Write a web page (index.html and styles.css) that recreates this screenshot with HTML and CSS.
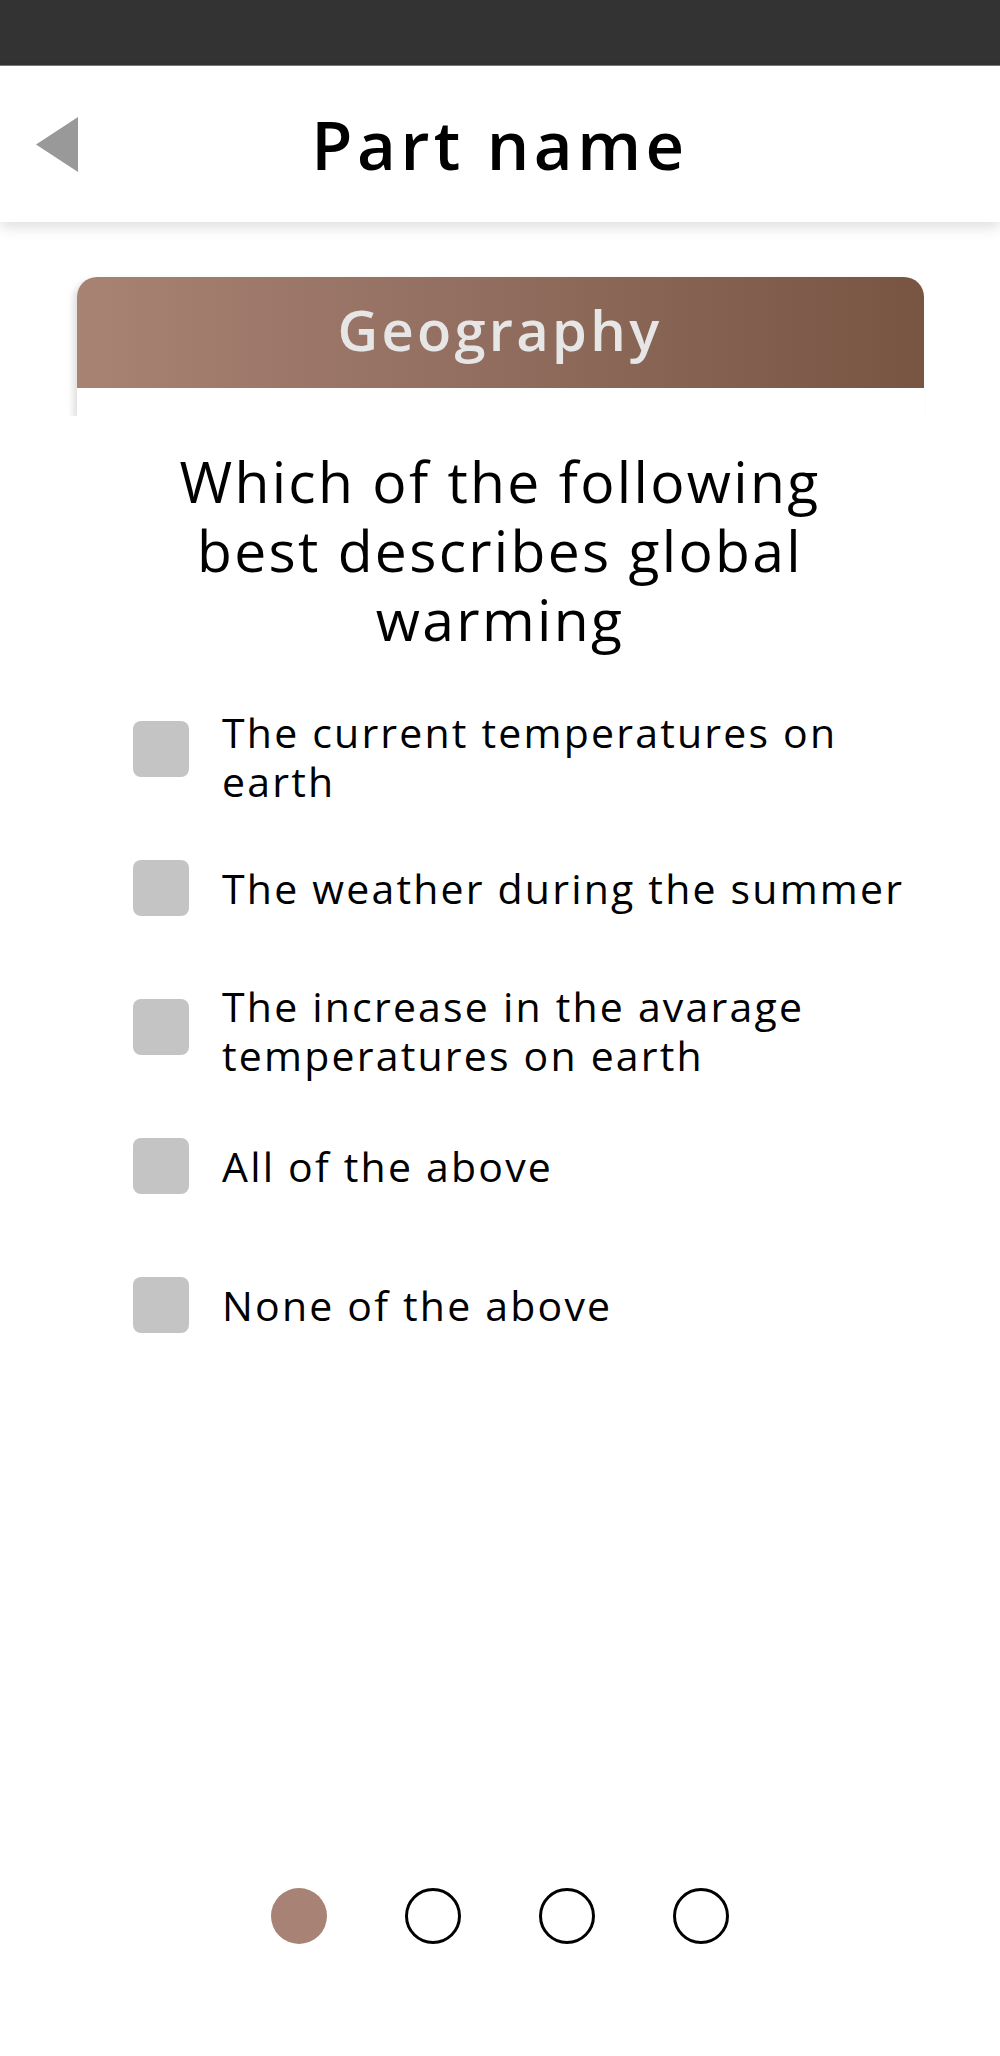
FILE: index.html
```html
<!DOCTYPE html>
<html lang="en">
<head>
<meta charset="utf-8">
<title>Part name</title>
<link rel="stylesheet" href="styles.css">
</head>
<body>
<div class="status"></div>
<header class="topbar">
  <div class="back">
    <svg width="42" height="55" viewBox="0 0 42 55"><polygon points="42,0 42,55 0,27.5" fill="#999999"/></svg>
  </div>
  <h1 class="title">Part name</h1>
  <div></div>
</header>
<main class="content">
  <section class="card">
    <div class="card-head">Geography</div>
    <div class="card-body"></div>
  </section>
  <p class="question">Which of the following best describes global warming</p>
  <ul class="options">
    <li class="option"><span class="box"></span><span class="label multi">The current temperatures on earth</span></li>
    <li class="option"><span class="box"></span><span class="label">The weather during the summer</span></li>
    <li class="option"><span class="box"></span><span class="label multi low">The increase in the avarage temperatures on earth</span></li>
    <li class="option"><span class="box"></span><span class="label">All of the above</span></li>
    <li class="option"><span class="box"></span><span class="label">None of the above</span></li>
  </ul>
  <nav class="dots">
    <span class="dot active"></span>
    <span class="dot"></span>
    <span class="dot"></span>
    <span class="dot"></span>
  </nav>
</main>
</body>
</html>
```
FILE: styles.css
```css
* { box-sizing: border-box; }
html, body { margin: 0; padding: 0; }
body {
  width: 1000px;
  height: 2056px;
  background: #ffffff;
  font-family: "Open Sans", "Noto Sans", "DejaVu Sans", sans-serif;
  color: #000;
  display: flex;
  flex-direction: column;
  overflow: hidden;
}
.status {
  height: 66px;
  background: #333333;
  border-bottom: 1px solid #7a7a7a;
  flex: none;
}
.topbar {
  height: 156px;
  flex: none;
  display: grid;
  grid-template-columns: 1fr auto 1fr;
  align-items: center;
  background: #fff;
  box-shadow: 0 6px 12px rgba(0,0,0,0.12);
  position: relative;
  z-index: 1;
}
.back {
  padding-left: 36px;
  display: flex;
  align-items: center;
}
.back svg { display: block; }
.title {
  margin: 0;
  font-size: 67px;
  font-weight: 600;
  letter-spacing: 4.5px;
  line-height: 1;
}
.content {
  flex: 1;
  display: flex;
  flex-direction: column;
  align-items: center;
}
.card {
  margin-top: 55px;
  width: 847px;
  border-radius: 20px 20px 0 0;
  box-shadow: -4px 3px 6px rgba(0,0,0,0.12);
  clip-path: inset(-12px -12px 0 -12px);
  background: #fff;
}
.card-head {
  height: 111px;
  padding-bottom: 8px;
  border-radius: 20px 20px 0 0;
  background: linear-gradient(90deg, #a88273 0%, #936f61 45%, #785443 100%);
  color: #e6e6e6;
  font-size: 56px;
  font-weight: 600;
  letter-spacing: 3.3px;
  display: flex;
  align-items: center;
  justify-content: center;
}
.card-body { height: 28px; }
.question {
  margin: 31px 0 0;
  max-width: 700px;
  text-align: center;
  font-size: 57px;
  font-weight: 500;
  line-height: 69px;
  letter-spacing: 2.3px;
}
.options {
  list-style: none;
  margin: 67px 0 0;
  padding: 0 0 0 133px;
  align-self: stretch;
  display: grid;
  grid-auto-rows: 139px;
}
.option {
  display: flex;
  align-items: flex-start;
  gap: 33px;
}
.box {
  flex: none;
  width: 56px;
  height: 56px;
  border-radius: 8px;
  background: #c4c4c4;
}
.label {
  max-width: 700px;
  font-size: 41px;
  line-height: 49px;
  letter-spacing: 2.2px;
  min-height: 56px;
  display: flex;
  align-items: center;
}
.label.multi { margin-top: -13px; }
.label.multi.low { margin-top: -17px; }
.dots {
  margin-top: auto;
  margin-bottom: 112px;
  display: flex;
  gap: 78px;
  align-items: center;
}
.dot {
  width: 56px;
  height: 56px;
  border-radius: 50%;
  border: 3px solid #000;
  background: #fff;
}
.dot.active {
  border: none;
  background: #a98276;
}
```
